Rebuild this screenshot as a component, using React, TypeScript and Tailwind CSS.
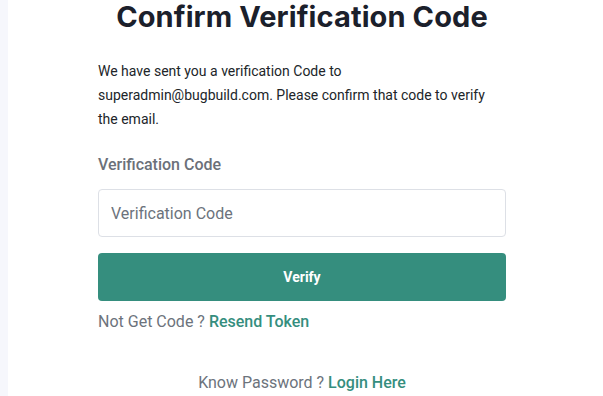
export default function App() {
  return (
    <div className="flex min-h-[396px] bg-white" style={{ fontFamily: "Roboto, sans-serif" }}>
      <div className="w-2 shrink-0 bg-[#f6f7fc]" />
      <div className="flex-1">
        <div className="ml-[90px] w-[408px]">
          <h1 className="text-center text-[29px] font-bold leading-[34px] tracking-[0.1px] text-[#1b202b]" style={{ fontFamily: "Inter, sans-serif" }}>
            Confirm Verification Code
          </h1>
          <p className="mt-[25px] text-[14px] leading-[24px] text-[#212529]">
            We have sent you a verification Code to superadmin@bugbuild.com. Please confirm that code to verify the email.
          </p>
          <label className="mt-[22px] block text-[16px] font-medium leading-[24px] text-[#6b7079]">
            Verification Code
          </label>
          <input
            type="text"
            placeholder="Verification Code"
            className="mt-[12px] block h-[48px] w-full rounded-[4px] border border-[#dde0e6] px-[12px] text-[16px] text-[#495057] placeholder:text-[#6c737c] outline-none"
          />
          <button
            type="button"
            className="mt-[16px] block h-[48px] w-full rounded-[4px] bg-[#358e7e] text-[14px] font-bold text-white"
          >
            Verify
          </button>
          <div className="mt-[9px] text-[16px] leading-[24px] text-[#6c737c]">
            Not Get Code ? <a className="font-medium text-[#358e7e]">Resend Token</a>
          </div>
          <div className="mt-[37px] text-center text-[16px] leading-[24px] text-[#6c737c]">
            Know Password ? <a className="font-medium text-[#358e7e]">Login Here</a>
          </div>
        </div>
      </div>
    </div>
  );
}
